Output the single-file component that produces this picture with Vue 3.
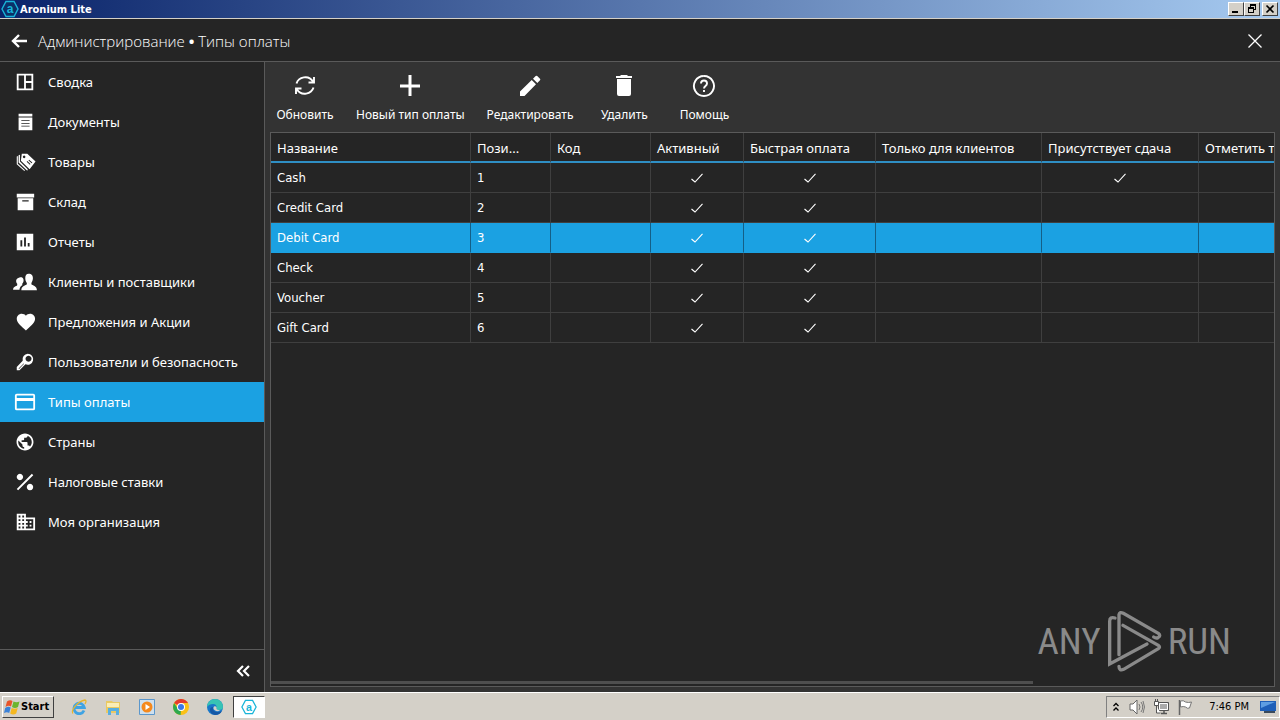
<template>
  <div class="desktop">
    <header class="titlebar">
      <svg class="app-icon" viewBox="0 0 18 18">
        <path d="M5 1.5h8L17 9l-4 7.500H5L1 9z" />
        <text x="9" y="13" text-anchor="middle">a</text>
      </svg>
      <span class="app-name">Aronium Lite</span>
      <div class="window-buttons">
        <button type="button" aria-label="Minimize">
          <svg viewBox="0 0 14 12"><path d="M3 8h6v2H3z" /></svg>
        </button>
        <button type="button" aria-label="Restore">
          <svg viewBox="0 0 14 12"><path d="M5 1h6v6H9v3H3V4h2zM6 3v1h3v2h1V3zM4 6v3h4V6z" fill-rule="evenodd" /></svg>
        </button>
        <button type="button" class="win-close" aria-label="Close window">
          <svg viewBox="0 0 14 12"><path d="M3.500 2.500l7 7M10.500 2.500l-7 7" stroke="#000" stroke-width="1.700" /></svg>
        </button>
      </div>
    </header>

    <div class="page-head">
      <button type="button" class="back" aria-label="Назад">
        <svg viewBox="0 0 16 14"><path d="M8 1L2 7l6 6M2 7h14" /></svg>
      </button>
      <h1>Администрирование <b>•</b> Типы оплаты</h1>
      <button type="button" class="close" aria-label="Закрыть">
        <svg viewBox="0 0 14 14"><path d="M.5.5l13 13M13.500.5l-13 13" /></svg>
      </button>
    </div>

    <div class="body">
      <aside class="sidebar">
        <nav>
          <a v-for="item in menu" :key="item.label" href="#" :class="{ active: item.active }">
            <svg :viewBox="item.box || '0 0 24 24'"><path :d="item.icon" fill-rule="evenodd" /></svg>
            <span>{{ item.label }}</span>
          </a>
        </nav>
        <div class="collapse">
          <button type="button" aria-label="Свернуть меню">
            <svg viewBox="0 0 14 12"><path d="M7 1L2 6l5 5M13 1L8 6l5 5" /></svg>
          </button>
        </div>
      </aside>

      <main class="content">
        <div class="toolbar">
          <button v-for="tool in tools" :key="tool.label" type="button">
            <svg viewBox="0 0 24 24"><path :d="tool.icon" :class="{ line: tool.line }" fill-rule="evenodd" /></svg>
            <span>{{ tool.label }}</span>
          </button>
        </div>

        <div class="grid">
          <div class="grid-scroll">
            <table :style="{ width: tableWidth + 'px' }">
              <colgroup>
                <col v-for="col in columns" :key="col.title" :style="{ width: col.width + 'px' }" />
              </colgroup>
              <thead>
                <tr>
                  <th v-for="col in columns" :key="col.title" scope="col">{{ col.title }}</th>
                </tr>
              </thead>
              <tbody>
                <tr v-for="row in rows" :key="row.position" :class="{ selected: row.selected }">
                  <td>{{ row.name }}</td>
                  <td>{{ row.position }}</td>
                  <td></td>
                  <td v-for="(flag, i) in row.flags" :key="i" class="flag">
                    <svg v-if="flag" viewBox="0 0 12 10"><path d="M.5 6l3.500 3L11.500.8" /></svg>
                  </td>
                </tr>
              </tbody>
            </table>
          </div>
          <div class="scrollbar"></div>
          <div class="watermark">
            <span>ANY</span>
            <svg viewBox="270 28 165 186">
              <path d="M294 52q-16-5-16 10V190L390 130" />
              <path d="M306 162V42q2-10 13-4L424 98q9 7-1 13q-6 3-13-2" />
              <path d="M318 74L424 134q7 5 0 10L320 206q-14 6-14-9" />
            </svg>
            <span>RUN</span>
          </div>
        </div>
      </main>
    </div>

    <footer class="taskbar">
      <button type="button" class="start">
        <svg viewBox="0 0 16 16">
          <path d="M3 2.500q3-2 5.500-.5L7 7.500Q4.500 6 1.500 8z" fill="#e8542a" />
          <path d="M9.500 2.500q3 1.500 6 0L14 8q-3 2-6 0z" fill="#6cb52d" />
          <path d="M1.200 9q3-2 5.500-.5L5.200 14Q3 12.500 0 14z" fill="#3b82d8" />
          <path d="M7.700 9q3 1.500 6 0l-1.500 5.500q-3 2-6 0z" fill="#f5b81f" />
        </svg>
        Start
      </button>
      <div class="quick">
        <button type="button" aria-label="Internet Explorer">
          <svg viewBox="0 0 16 16">
            <path d="M13 11.500A5.200 5.200 0 1 1 13.300 8.500H4" fill="none" stroke="#3fa3e3" stroke-width="2.800" />
            <path d="M2 14.500C-1 12 7 2 14 1q2 .5 0 4" fill="none" stroke="#e8b52c" stroke-width="1.300" />
          </svg>
        </button>
        <button type="button" aria-label="Explorer">
          <svg viewBox="0 0 16 16">
            <path d="M1 2h6l1 1h7v11H1z" fill="#e9c963" />
            <path d="M2 4h12v4H2z" fill="#fbedb5" />
            <path d="M3 16V9h11v7h-3v-4H6v4z" fill="#58aee0" />
          </svg>
        </button>
        <button type="button" aria-label="Media Player">
          <svg viewBox="0 0 16 16">
            <path d="M.5.5h15v15H.5z" fill="#cfe0ee" stroke="#5b97cc" />
            <circle cx="8" cy="8" r="5.500" fill="#f5891d" />
            <path d="M6.500 5l4.500 3-4.500 3z" fill="#fff" />
          </svg>
        </button>
        <button type="button" aria-label="Chrome">
          <svg viewBox="0 0 16 16">
            <circle cx="8" cy="8" r="8" fill="#fbc116" />
            <path d="M8 8L1.100 4A8 8 0 0 1 15 4H8z" fill="#e33b2e" />
            <path d="M8 8l-.4 8A8 8 0 0 1 1.100 4L5 10z" fill="#2da94f" />
            <circle cx="8" cy="8" r="4" fill="#fff" />
            <circle cx="8" cy="8" r="3" fill="#3b78e7" />
          </svg>
        </button>
        <button type="button" aria-label="Edge">
          <svg viewBox="0 0 16 16">
            <circle cx="8" cy="8" r="8" fill="#1877c9" />
            <path d="M0 8a8 8 0 0 1 16 0q0 3-4 3-3 0-2.500-2Q10 5 6 5 2 5 0 8z" fill="#37c3b4" />
            <path d="M6 8q-1 5 5 5 2 0 4-1-2 4-7 4-5-1-5-5 0-3 3-3z" fill="#1557a5" />
            <path d="M6.500 8.500Q7 6.500 9 7.500q1 1 .5 2.500 1 1.500 4 1-3 2.500-6 0-1.500-1-1-2.500z" fill="#d4d0c8" />
          </svg>
        </button>
      </div>
      <button type="button" class="task-active" aria-label="Aronium">
        <svg class="app-icon light" viewBox="0 0 18 18">
          <path d="M5 1.500h8L17 9l-4 7.500H5L1 9z" />
          <text x="9" y="13" text-anchor="middle">a</text>
        </svg>
      </button>
      <div class="tray">
        <svg class="chevrons" viewBox="0 0 6 10"><path d="M.5 4L3 1.500 5.500 4M.5 8.500L3 6l2.500 2.500" fill="none" stroke="#000" stroke-width="1.300" /></svg>
        <svg viewBox="0 0 16 16">
          <path d="M1 5h3l4-4v14l-4-4H1z" fill="#fff" stroke="#666" />
          <path d="M10 5q2 3 0 6M12 3q3.500 5 0 10M14 2q3 6 0 12" fill="none" stroke="#777" />
        </svg>
        <svg viewBox="0 0 16 16">
          <path d="M5.500 3.500h10v8h-10z" fill="#aaa" stroke="#555" />
          <path d="M6.500 4.500h8v6h-8z" fill="none" stroke="#fff" />
          <path d="M8 14.500h6M11 12v2" stroke="#555" stroke-width="1.500" />
          <path d="M1.500 2.500h4v4h-4zM2.500 0v2M4.500 0v2M3.500 7v7h4" fill="#fff" stroke="#555" />
        </svg>
        <svg viewBox="0 0 16 16">
          <path d="M2.500 1v15" stroke="#666" stroke-width="1.500" />
          <path d="M3.500 2q3-1 5 1 3 1 6 0l-2 6q-2 1-4-1-2-1-5 0z" fill="#fff" stroke="#777" />
        </svg>
        <time>7:46 PM</time>
        <svg viewBox="0 0 16 16">
          <path d="M0 2h16v10H0z" fill="#1f5fb8" />
          <path d="M1 3h14L1 9z" fill="#5f9ee2" />
          <path d="M4 12h11v2H4z" fill="#3a4a5c" />
        </svg>
      </div>
    </footer>
  </div>
</template>

<script setup>
const menu = [
  { label: 'Сводка', icon: 'M3 3h18v18H3zM5 5v14h6V5zM13 5v6h6V5zM13 13v6h6v-6z' },
  { label: 'Документы', icon: 'M5 3h15v3H5zM5 7h15v14H5zM8 10v1h9v-1zM8 13v1h9v-1zM8 16v1h9v-1z' },
  {
    label: 'Товары',
    icon: 'M8.500 3h6l9 8.500-6.500 8.500L7.500 10.500zM11 5a1.400 1.400 0 1 0 .1 0zM14.500 11l-.7.800 3.500 3.100.7-.8zM16.500 9.500l-.7.800 3.500 3.100.7-.8zM5 4.500L6.500 4v7.500L15 20l-.5 1.500L5 12.500zM3 6l1.200-.5v8.300L12 21l-.7.800L3 14.500z'
  },
  { label: 'Склад', icon: 'M3 3h19v4H3zM4 8h17v13H4zM9 10v1.500h7V10z' },
  { label: 'Отчеты', icon: 'M3 3h18v18H3zM7 10v7h2v-7zM11 7v10h2V7zM15 13v4h2v-4z' },
  {
    label: 'Клиенты и поставщики',
    icon: 'M16 3c3 0 5 2 4.600 5.500C20.300 11 19.500 12 19 13v1.500c1 1.500 6 1.500 6 6.500H8c0-5 5-5 6-6.500V13c-.7-1-1.500-2-1.700-4.500C12 5 13.500 3 16 3zM6 7c1.800-.6 4 0 4.300 2 .4 2 0 3.500-1.300 5v1.500c-2 1-3 3-3 5H-1c0-4 3.500-3.500 4.500-5V14C1.500 11 2 8 6 7z'
  },
  {
    label: 'Предложения и Акции',
    icon: 'M12 21.350l-1.450-1.320C5.400 15.360 2 12.280 2 8.500 2 5.420 4.420 3 7.500 3c1.740 0 3.410.81 4.500 2.090C13.090 3.810 14.760 3 16.500 3 19.580 3 22 5.420 22 8.500c0 3.780-3.400 6.860-8.550 11.540z',
    box: '-1 0 24 24'
  },
  {
    label: 'Пользователи и безопасность',
    icon: 'M15 3a6 6 0 1 1-2.500 11.500L6 21H3v-3.500l6.500-7A6 6 0 0 1 15 3zM15.800 5.200a3.300 3.300 0 1 0 .1 0zM10.500 13.500l-5.500 5.500.5.500 5.500-5.500z'
  },
  {
    label: 'Типы оплаты',
    icon: 'M3 3h18q2 0 2 2v14q0 2-2 2H3q-2 0-2-2V5q0-2 2-2zM3 5v2.500h18V5zM3 11v8h18v-8z',
    active: true
  },
  {
    label: 'Страны',
    icon: 'M12 2C6.480 2 2 6.480 2 12s4.480 10 10 10 10-4.480 10-10S17.520 2 12 2zm-1 17.930c-3.950-.49-7-3.850-7-7.930 0-.62.08-1.210.21-1.790L9 15v1c0 1.100.9 2 2 2v1.930zm6.900-2.540c-.26-.81-1-1.390-1.900-1.390h-1v-3c0-.55-.45-1-1-1H8v-2h2c.55 0 1-.45 1-1V7h2c1.100 0 2-.9 2-2v-.41c2.930 1.190 5 4.060 5 7.410 0 2.080-.8 3.970-2.100 5.390z',
    box: '-1 -1 26 26'
  },
  {
    label: 'Налоговые ставки',
    icon: 'M6.500 3a3.500 3.500 0 1 1-.1 0zM17.500 14a3.500 3.500 0 1 1-.1 0zM19.500 3L21 4.500 4.500 21 3 19.500z'
  },
  {
    label: 'Моя организация',
    icon: 'M12 7V3H2v18h20V7H12zM6 19H4v-2h2v2zm0-4H4v-2h2v2zm0-4H4V9h2v2zm0-4H4V5h2v2zm4 12H8v-2h2v2zm0-4H8v-2h2v2zm0-4H8V9h2v2zm0-4H8V5h2v2zm10 12h-8v-2h2v-2h-2v-2h2v-2h-2V9h8v10zm-2-8h-2v2h2v-2zm0 4h-2v2h2v-2z',
    box: '-1 0 24 24'
  }
]

const tools = [
  {
    label: 'Обновить',
    icon: 'M3.500 9.500C5.500 3 15.500.5 20 7.500M21 3v5.500h-5.500M20.500 13.500C18.500 20 8.500 22.500 4 15.500M3 20v-5.500h5.500',
    line: true
  },
  { label: 'Новый тип оплаты', icon: 'M10.500 1h3v9.500H22v3h-8.500V22h-3v-8.500H2v-3h8.500z' },
  { label: 'Редактировать', icon: 'M2 17.500V22h4.500L18 10.300 13.700 6zM15 4.700L19.300 9 22 6.300q.7-.7 0-1.500L19.200 2q-.8-.7-1.500 0z' },
  { label: 'Удалить', icon: 'M9 1h6l1 1h4v2H4V2h4zM5 5h14v15q0 2-2 2H7q-2 0-2-2z' },
  {
    label: 'Помощь',
    icon: 'M12 2a10 10 0 1 1-.1 0M9 9.500C9 5.500 15 5.500 15 9.500c0 2.500-3 2.500-3 5M12 16v2',
    line: true
  }
]

const columns = [
  { title: 'Название', width: 200 },
  { title: 'Пози...', width: 80 },
  { title: 'Код', width: 100 },
  { title: 'Активный', width: 93 },
  { title: 'Быстрая оплата', width: 132 },
  { title: 'Только для клиентов', width: 166 },
  { title: 'Присутствует сдача', width: 157 },
  { title: 'Отметить транзакцию', width: 391 }
]
const tableWidth = columns.reduce((sum, col) => sum + col.width, 0)

// flags: active, quick payment, customer required, change allowed, mark as paid
const rows = [
  { name: 'Cash', position: 1, flags: [true, true, false, true, false] },
  { name: 'Credit Card', position: 2, flags: [true, true, false, false, false] },
  { name: 'Debit Card', position: 3, flags: [true, true, false, false, false], selected: true },
  { name: 'Check', position: 4, flags: [true, true, false, false, false] },
  { name: 'Voucher', position: 5, flags: [true, true, false, false, false] },
  { name: 'Gift Card', position: 6, flags: [true, true, false, false, false] }
]
</script>

<style>
body {
  margin: 0;
}
</style>

<style scoped>
.desktop {
  display: flex;
  flex-direction: column;
  min-height: 100vh;
  background: #252525;
  color: #fff;
  font-family: 'Noto Sans', sans-serif;
  font-size: 13px;
}
button {
  padding: 0;
  border: none;
  background: none;
  color: inherit;
  font: inherit;
}
svg {
  display: block;
  flex: none;
}

/* window title */
.titlebar {
  display: flex;
  align-items: center;
  gap: 1px;
  height: 18px;
  padding: 0 2px 0 1px;
  border-bottom: 1px solid #d4d0c8;
  background: linear-gradient(90deg, #0a246a, #a6caf0);
}
.app-icon {
  width: 18px;
  height: 18px;
}
.app-icon path {
  fill: #0b3068;
  stroke: #19b5d8;
  stroke-width: 1.4;
}
.app-icon text {
  fill: #19b5d8;
  font: bold 12px 'Liberation Sans', sans-serif;
}
.app-icon.light path {
  fill: #fff;
}
.app-name {
  flex: 1;
  font-family: 'DejaVu Sans Condensed', 'DejaVu Sans', sans-serif;
  font-size: 11px;
  font-weight: 700;
}
.window-buttons {
  display: flex;
}
.window-buttons button {
  width: 16px;
  height: 14px;
  border: 1px solid;
  border-color: #fff #404040 #404040 #fff;
  background: #d4d0c8;
}
.window-buttons svg {
  width: 14px;
  height: 12px;
}
.window-buttons .win-close {
  margin-left: 2px;
}

/* page header */
.page-head {
  display: flex;
  align-items: center;
  box-sizing: border-box;
  height: 43px;
  padding: 2px 18px 0 11px;
  border-bottom: 1px solid #5a5a5a;
}
.page-head path {
  fill: none;
  stroke: #fff;
}
.back svg {
  width: 16px;
  height: 14px;
  stroke-width: 2.4;
}
h1 {
  flex: 1;
  margin: 0 0 0 11px;
  font: 300 15px 'Open Sans', sans-serif;
}
h1 b {
  font-weight: 700;
}
.close svg {
  width: 14px;
  height: 14px;
  stroke-width: 1.3;
}

.body {
  display: flex;
  flex: 1;
}

/* menu */
.sidebar {
  display: flex;
  flex-direction: column;
  justify-content: space-between;
  width: 264px;
  border-right: 1px solid #5a5a5a;
}
nav a {
  display: flex;
  align-items: center;
  gap: 12px;
  height: 40px;
  padding-left: 14px;
  color: #fff;
  text-decoration: none;
}
nav a.active {
  background: #1ba1e2;
}
nav svg {
  width: 22px;
  height: 22px;
  fill: #fff;
  overflow: visible;
}
.collapse {
  display: flex;
  align-items: center;
  justify-content: flex-end;
  height: 42px;
  padding-right: 14px;
  border-top: 1px solid #5a5a5a;
}
.collapse svg {
  width: 14px;
  height: 12px;
  fill: none;
  stroke: #fff;
  stroke-width: 2.2;
}

/* content */
.content {
  display: flex;
  flex: 1;
  flex-direction: column;
  min-width: 0;
  padding: 0 5px 5px;
  background: #333;
}
.toolbar {
  display: flex;
  align-items: flex-start;
  height: 70px;
  margin-left: -5px;
}
.toolbar button {
  display: flex;
  flex-direction: column;
  align-items: center;
  gap: 8px;
  min-width: 80px;
  padding: 12px 11px 0;
  font-size: 12px;
  line-height: 18px;
}
.toolbar svg {
  width: 24px;
  height: 24px;
  fill: #fff;
}
.toolbar .line {
  fill: none;
  stroke: #fff;
  stroke-width: 1.9;
}
.grid {
  position: relative;
  display: flex;
  flex: 1;
  flex-direction: column;
  justify-content: space-between;
  border: 1px solid #5a5a5a;
  background: #252525;
}
.grid-scroll {
  overflow: hidden;
}
table {
  border-collapse: separate;
  border-spacing: 0;
  table-layout: fixed;
}
th,
td {
  box-sizing: border-box;
  height: 30px;
  padding: 0 6px;
  border-right: 1px solid #3f3f3f;
  border-bottom: 1px solid #3f3f3f;
  line-height: 18px;
  text-align: left;
  white-space: nowrap;
}
th {
  padding-top: 1px;
  border-bottom: 2px solid #2f8fc4;
  font-weight: 400;
}
td {
  font-family: 'DejaVu Sans Condensed', 'DejaVu Sans', sans-serif;
}
.selected td {
  border-color: #145f87 #145f87 #1ba1e2;
  background: #1ba1e2;
}
.flag svg {
  width: 12px;
  height: 10px;
  margin: 0 auto;
  fill: none;
  stroke: #fff;
  stroke-width: 1.1;
}
.scrollbar {
  width: 76%;
  height: 3px;
  margin-bottom: 2px;
  background: #4f4f4f;
}
.watermark {
  position: absolute;
  right: 43px;
  bottom: 14px;
  display: flex;
  align-items: center;
  gap: 6px;
  color: #8a8a8a;
  font: 37px 'Roboto Condensed', 'DejaVu Sans Condensed', sans-serif;
}
.watermark svg {
  width: 55px;
  height: 62px;
  fill: none;
  stroke: #8a8a8a;
  stroke-width: 10;
  stroke-linecap: round;
}

/* taskbar */
.taskbar {
  display: flex;
  align-items: center;
  height: 27px;
  border-top: 1px solid #fff;
  background: #d4d0c8;
  color: #000;
  font-family: 'DejaVu Sans Condensed', 'DejaVu Sans', sans-serif;
  font-size: 11px;
}
.taskbar svg {
  width: 16px;
  height: 16px;
}
.start {
  display: flex;
  align-items: center;
  gap: 1px;
  width: 52px;
  height: 22px;
  margin-left: 2px;
  padding-left: 1px;
  border: 1px solid;
  border-color: #fff #404040 #404040 #fff;
  font-weight: 700;
  box-sizing: border-box;
}
.quick {
  display: flex;
  gap: 18px;
  margin-left: 17px;
}
.task-active {
  display: flex;
  align-items: center;
  justify-content: center;
  width: 32px;
  height: 22px;
  margin-left: 10px;
  border: 1px solid;
  border-color: #404040 #fff #fff #404040;
  background: #fff;
  box-sizing: border-box;
}
.tray {
  display: flex;
  align-items: center;
  gap: 8px;
  height: 22px;
  margin-left: auto;
  padding: 0 3px 0 6px;
  border: 1px solid;
  border-color: #808080 #fff #fff #808080;
  box-sizing: border-box;
}
.tray .chevrons {
  width: 6px;
  height: 10px;
  margin-right: 2px;
}
time {
  margin: 0 3px 0 8px;
}
</style>
